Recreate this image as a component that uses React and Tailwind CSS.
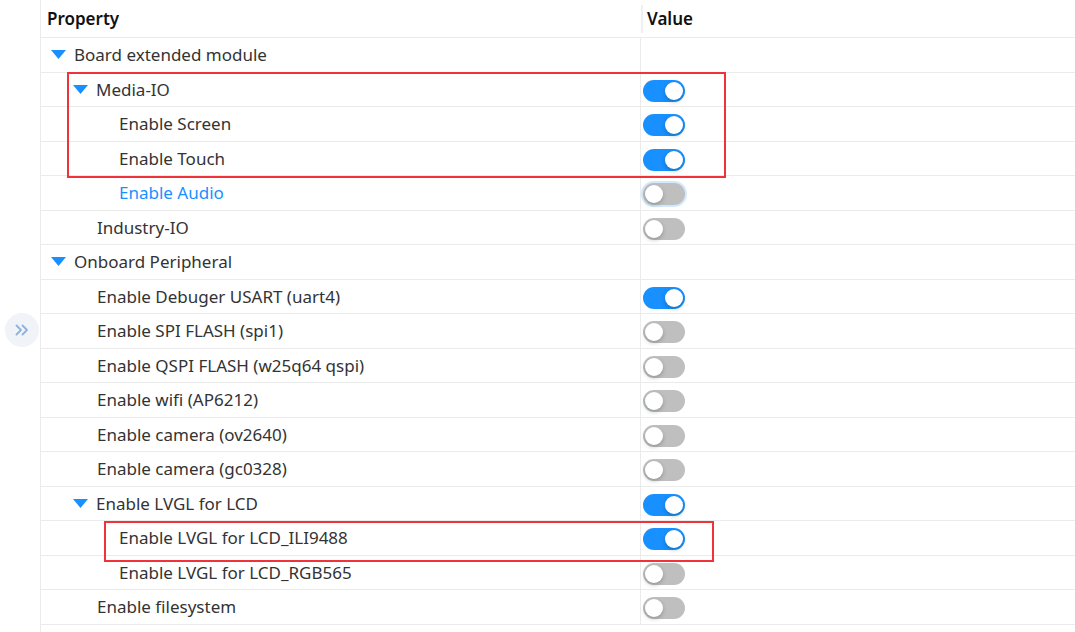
import React from "react";

const rows = [
  { label: "Board extended module", level: 0, caret: true, value: null },
  { label: "Media-IO", level: 1, caret: true, value: true },
  { label: "Enable Screen", level: 2, value: true },
  { label: "Enable Touch", level: 2, value: true },
  { label: "Enable Audio", level: 2, value: false, active: true },
  { label: "Industry-IO", level: 1, value: false },
  { label: "Onboard Peripheral", level: 0, caret: true, value: null },
  { label: "Enable Debuger USART (uart4)", level: 1, value: true },
  { label: "Enable SPI FLASH (spi1)", level: 1, value: false },
  { label: "Enable QSPI FLASH (w25q64 qspi)", level: 1, value: false },
  { label: "Enable wifi (AP6212)", level: 1, value: false },
  { label: "Enable camera (ov2640)", level: 1, value: false },
  { label: "Enable camera (gc0328)", level: 1, value: false },
  { label: "Enable LVGL for LCD", level: 1, caret: true, value: true },
  { label: "Enable LVGL for LCD_ILI9488", level: 2, value: true },
  { label: "Enable LVGL for LCD_RGB565", level: 2, value: false },
  { label: "Enable filesystem", level: 1, value: false },
];

function Caret() {
  return (
    <svg width="15" height="9" viewBox="0 0 15 9" className="mr-[8px] shrink-0">
      <path d="M0 0 H15 L7.5 9 Z" fill="#1890ff" />
    </svg>
  );
}

function Toggle({ on, focus }) {
  return (
    <div
      className={
        "relative w-[42px] h-[22px] rounded-full " +
        (on ? "bg-[#1890ff]" : "bg-[#bfbfbf]") +
        (focus ? " shadow-[0_0_0_2px_rgba(24,144,255,0.2)]" : "")
      }
    >
      <div
        className={
          "absolute top-[2px] w-[18px] h-[18px] rounded-full bg-white shadow-[0_2px_4px_rgba(0,35,11,0.25)] " +
          (on ? "left-[22px]" : "left-[2px]")
        }
      />
    </div>
  );
}

function Row({ row }) {
  // caret rows start with the triangle, plain rows line up with the caret rows' text
  const pad = row.caret ? 10 + row.level * 22 : 56 + (row.level - 1) * 22;
  return (
    <div className="flex h-[34.5px] border-b border-[#ebebeb]">
      <div
        className={
          "w-[600px] flex items-center border-r border-[#ebebeb] " +
          (row.active ? "text-[#1890ff]" : "text-[#333]")
        }
        style={{ paddingLeft: pad }}
      >
        {row.caret && <Caret />}
        <span>{row.label}</span>
      </div>
      <div className="flex-1 flex items-center pl-[2px] pt-[3px]">
        {row.value !== null && <Toggle on={row.value} focus={row.active} />}
      </div>
    </div>
  );
}

export default function App() {
  return (
    <div
      className="relative w-[1075px] h-[632px] overflow-hidden bg-white flex text-[17px]"
      style={{ fontFamily: '"Noto Sans", "Open Sans", sans-serif' }}
    >
      <div className="w-[41px] shrink-0 border-r border-[#ebebeb] flex items-center justify-center">
        <div className="w-[34px] h-[34px] rounded-full bg-[#f0f3f7] flex items-center justify-center mt-[28px] ml-[3px]">
          <svg width="14" height="12" viewBox="0 0 14 12" fill="none" stroke="#8fb2d9" strokeWidth="1.8" strokeLinecap="round" strokeLinejoin="round">
            <path d="M1.5 1.5 L6 6 L1.5 10.5" />
            <path d="M7.5 1.5 L12 6 L7.5 10.5" />
          </svg>
        </div>
      </div>
      <div className="flex-1 flex flex-col">
        <div className="flex h-[38px] border-b border-[#ebebeb] font-semibold text-[#111]">
          <div className="w-[600px] flex items-center pl-[6px]">Property</div>
          <div className="flex-1 flex items-center">
            <div className="h-[28px] border-l-2 border-[#f0f0f0]" />
            <span className="pl-[4px]">Value</span>
          </div>
        </div>
        {rows.map((r) => (
          <Row key={r.label} row={r} />
        ))}
      </div>

      <div className="absolute left-[67px] top-[72px] w-[659px] h-[106px] border-2 border-[#f0333a]" />
      <div className="absolute left-[104px] top-[521px] w-[610px] h-[41px] border-2 border-[#f0333a]" />
    </div>
  );
}
